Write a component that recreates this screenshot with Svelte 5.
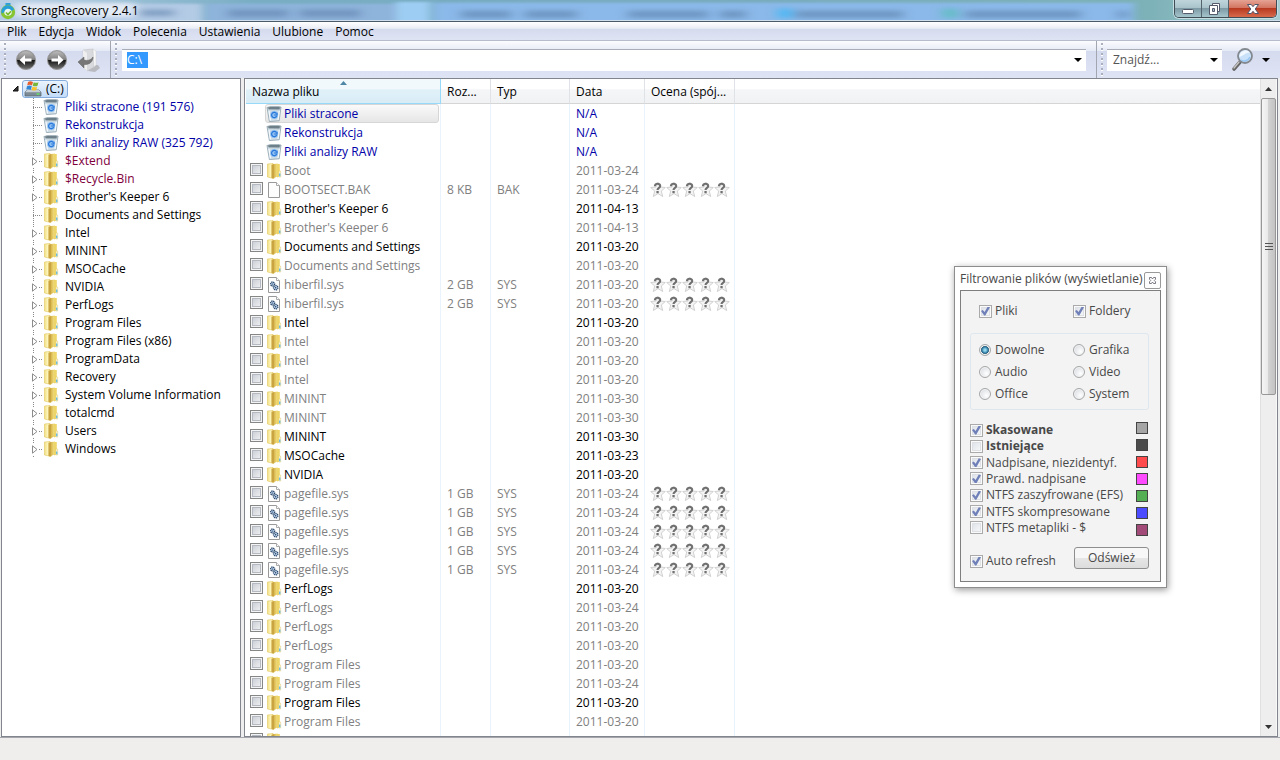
<script lang="ts">
	type Kind = 'bin' | 'folder' | 'file' | 'sys'
	type Tone = 'system' | 'meta' | 'normal' | 'deleted'

	interface TreeItem {
		label: string
		kind: Kind
		tone: Tone
		expandable: boolean
	}

	interface Row {
		name: string
		kind: Kind
		tone: Tone
		size: string
		type: string
		date: string
	}

	const menu = ['Plik', 'Edycja', 'Widok', 'Polecenia', 'Ustawienia', 'Ulubione', 'Pomoc']

	function branch(label: string, tone: Tone = 'normal', expandable = true, kind: Kind = 'folder'): TreeItem {
		return { label, kind, tone, expandable }
	}

	const tree: TreeItem[] = [
		branch('Pliki stracone (191 576)', 'system', false, 'bin'),
		branch('Rekonstrukcja', 'system', false, 'bin'),
		branch('Pliki analizy RAW (325 792)', 'system', false, 'bin'),
		branch('$Extend', 'meta'),
		branch('$Recycle.Bin', 'meta'),
		branch("Brother's Keeper 6"),
		branch('Documents and Settings', 'normal', false),
		branch('Intel'),
		branch('MININT'),
		branch('MSOCache'),
		branch('NVIDIA'),
		branch('PerfLogs'),
		branch('Program Files'),
		branch('Program Files (x86)'),
		branch('ProgramData'),
		branch('Recovery'),
		branch('System Volume Information'),
		branch('totalcmd'),
		branch('Users'),
		branch('Windows'),
	]

	function bin(name: string): Row {
		return { name, kind: 'bin', tone: 'system', size: '', type: '', date: 'N/A' }
	}

	function folder(name: string, date: string, tone: Tone = 'deleted'): Row {
		return { name, kind: 'folder', tone, size: '', type: '', date }
	}

	function sys(name: string, size: string, date: string): Row {
		return { name, kind: 'sys', tone: 'deleted', size, type: 'SYS', date }
	}

	const rows: Row[] = [
		bin('Pliki stracone'),
		bin('Rekonstrukcja'),
		bin('Pliki analizy RAW'),
		folder('Boot', '2011-03-24'),
		{ name: 'BOOTSECT.BAK', kind: 'file', tone: 'deleted', size: '8 KB', type: 'BAK', date: '2011-03-24' },
		folder("Brother's Keeper 6", '2011-04-13', 'normal'),
		folder("Brother's Keeper 6", '2011-04-13'),
		folder('Documents and Settings', '2011-03-20', 'normal'),
		folder('Documents and Settings', '2011-03-20'),
		sys('hiberfil.sys', '2 GB', '2011-03-20'),
		sys('hiberfil.sys', '2 GB', '2011-03-20'),
		folder('Intel', '2011-03-20', 'normal'),
		folder('Intel', '2011-03-20'),
		folder('Intel', '2011-03-20'),
		folder('Intel', '2011-03-20'),
		folder('MININT', '2011-03-30'),
		folder('MININT', '2011-03-30'),
		folder('MININT', '2011-03-30', 'normal'),
		folder('MSOCache', '2011-03-23', 'normal'),
		folder('NVIDIA', '2011-03-20', 'normal'),
		sys('pagefile.sys', '1 GB', '2011-03-24'),
		sys('pagefile.sys', '1 GB', '2011-03-24'),
		sys('pagefile.sys', '1 GB', '2011-03-24'),
		sys('pagefile.sys', '1 GB', '2011-03-24'),
		sys('pagefile.sys', '1 GB', '2011-03-24'),
		folder('PerfLogs', '2011-03-20', 'normal'),
		folder('PerfLogs', '2011-03-24'),
		folder('PerfLogs', '2011-03-20'),
		folder('PerfLogs', '2011-03-20'),
		folder('Program Files', '2011-03-20'),
		folder('Program Files', '2011-03-24'),
		folder('Program Files', '2011-03-20', 'normal'),
		folder('Program Files', '2011-03-20'),
		folder('', ''),
	]

	let selectedRow = $state(0)
	let path = $state('C:\\')
	let category = $state('Dowolne')
	let dialogOpen = $state(true)
	let showFiles = $state(true)
	let showFolders = $state(true)
	let autoRefresh = $state(true)

	const categories = ['Dowolne', 'Grafika', 'Audio', 'Video', 'Office', 'System']

	let filters = $state([
		{ label: 'Skasowane', color: '#a5a5a5', on: true, strong: true },
		{ label: 'Istniejące', color: '#4b4b4b', on: false, strong: true },
		{ label: 'Nadpisane, niezidentyf.', color: '#ff4b4b', on: true, strong: false },
		{ label: 'Prawd. nadpisane', color: '#ff4bff', on: true, strong: false },
		{ label: 'NTFS zaszyfrowane (EFS)', color: '#54ae54', on: true, strong: false },
		{ label: 'NTFS skompresowane', color: '#4b4bff', on: true, strong: false },
		{ label: 'NTFS metapliki - $', color: '#a34b78', on: false, strong: false },
	])
</script>

{#snippet icon(kind: Kind)}
	<svg class="icon" width="16" height="16" viewBox="0 0 16 16" aria-hidden="true">
		{#if kind === 'bin'}
			<path d="M1 1.500 15 1l-1.800 13.800-9.800.8z" fill="#cfdde6" stroke="#8fa2ad" stroke-width=".8" />
			<path d="M1 1.500 4.500.5h8L15 1.500l-2 2.300-10-.2z" fill="#6d7f88" stroke="#a8b8c0" stroke-width=".8" />
			<path d="m3 5 1.400 9.300M13.300 5l-1.300 9" stroke="#f5fafc" stroke-width="1.200" />
			<circle cx="8.200" cy="9" r="4" fill="#8fc0f4" />
			<path d="M10.200 7.400a2.600 2.600 0 1 0 .4 2.600M8.200 9H11V6.700" fill="none" stroke="#2877d8" stroke-width="1.200" />
		{:else if kind === 'folder'}
			<path d="M1.500 1 7 .5l1 1v14L1.500 14z" fill="url(#folder-left)" stroke="#e0c860" stroke-width=".6" />
			<path d="M5.500 2 8 1v14l-1 .6-1.500-.6z" fill="#c9a440" />
			<path d="m8 1 4-.5v12.800L8 15z" fill="url(#folder-mid)" />
			<path d="M11 1h2.800v12.500L11 14.500z" fill="#eed568" />
			<path d="M12.800 8h1.900v6h-1.900z" fill="#fbf8de" stroke="#dcbf50" stroke-width=".4" />
			<path d="M13.800 10.500v2.800" stroke="#31a7ec" />
		{:else}
			<path d="M2.500.5h8l3 3v12h-11z" fill="#fdfdfd" stroke="#999" />
			<path d="M10.500.5v3h3" fill="#fff" stroke="#aaa" />
			{#if kind === 'sys'}
				<circle cx="6.600" cy="7" r="2" fill="#bdd0e8" stroke="#29496d" stroke-width="1.300" stroke-dasharray="1.200 .6" />
				<circle cx="9.700" cy="10.700" r="2.200" fill="#bdd0e8" stroke="#29496d" stroke-width="1.300" stroke-dasharray="1.200 .6" />
				<circle cx="6.600" cy="7" r=".6" fill="#173a63" />
				<circle cx="9.700" cy="10.700" r=".7" fill="#173a63" />
			{/if}
		{/if}
	</svg>
{/snippet}

{#snippet caret()}
	<svg width="8" height="4" viewBox="0 0 8 4" aria-hidden="true"><path d="M0 0h8L4 4z" fill="#000" /></svg>
{/snippet}

{#snippet arrowIcon(back: boolean)}
	<svg width="22" height="22" viewBox="0 0 22 22" aria-hidden="true">
		<circle cx="11" cy="11" r="9.500" fill="url(#orb)" stroke="#999" />
		<path d="M2.200 11a8.800 8.800 0 0 1 17.600 0z" fill="#fff" opacity=".25" />
		<path
			d={back ? 'M4.500 11 10 6v3.400h6.500v3.200H10V16z' : 'M17.500 11 12 6v3.400H5.500v3.200H12V16z'}
			fill="#fff"
		/>
	</svg>
{/snippet}

<svg class="defs" width="0" height="0" aria-hidden="true">
	<defs>
		<linearGradient id="folder-left">
			<stop offset="0" stop-color="#f2df86" />
			<stop offset=".5" stop-color="#fdf6bd" />
			<stop offset="1" stop-color="#e2c65a" />
		</linearGradient>
		<linearGradient id="folder-mid">
			<stop offset="0" stop-color="#d8b64c" />
			<stop offset="1" stop-color="#f8e78e" />
		</linearGradient>
		<linearGradient id="orb" x2="0" y2="1">
			<stop offset="0" stop-color="#aaa" />
			<stop offset=".48" stop-color="#555" />
			<stop offset=".5" stop-color="#111" />
			<stop offset="1" stop-color="#777" />
		</linearGradient>
		<filter id="tab-blur" x="-5%" y="-50%" width="110%" height="200%" color-interpolation-filters="sRGB">
			<feGaussianBlur stdDeviation="4 1" />
		</filter>
		<filter id="text-blur" x="-5%" y="-100%" width="110%" height="300%" color-interpolation-filters="sRGB">
			<feGaussianBlur stdDeviation="6 2" />
		</filter>
	</defs>
</svg>

<div class="window">
	<header class="titlebar">
		<svg class="glass" viewBox="0 0 1280 21" preserveAspectRatio="none" aria-hidden="true">
			<g filter="url(#tab-blur)">
				<rect x="-20" y="4" width="222" height="24" fill="#b4cbe6" />
				<rect x="207" y="4" width="190" height="24" fill="#8fb4dc" />
				<rect x="396" y="2" width="34" height="24" fill="#9dcdf2" />
				<rect x="434" y="3" width="700" height="25" fill="#8bb9e9" />
			</g>
			<g filter="url(#text-blur)">
				<rect x="15" y="3" width="120" height="15" fill="#e2eaf4" />
				<g fill="#5b7fa8" opacity=".55">
					<rect x="140" y="10" width="34" height="7" />
					<rect x="228" y="10" width="60" height="8" />
					<rect x="300" y="10" width="60" height="8" />
					<rect x="461" y="11" width="50" height="8" />
					<rect x="525" y="11" width="52" height="8" />
					<rect x="628" y="11" width="80" height="8" />
					<rect x="720" y="11" width="26" height="8" />
					<rect x="795" y="11" width="108" height="8" />
					<rect x="965" y="11" width="116" height="8" />
					<rect x="1118" y="11" width="10" height="8" />
				</g>
				<rect x="778" y="9" width="14" height="10" fill="#4fb8f4" />
				<rect x="943" y="9" width="14" height="10" fill="#62bcc4" />
			</g>
		</svg>
		<svg class="logo" width="16" height="18" viewBox="0 0 16 18" aria-hidden="true">
			<path d="M5.500 1h5v2.500h-5z" fill="#2b9fdb" />
			<circle cx="8" cy="10" r="5.500" fill="#e9f6ef" stroke="#87c532" stroke-width="3.400" />
			<path d="M1.700 11.500A6.400 6.400 0 0 1 14 7.800l-2.500 1A4 4 0 0 0 4 10.200z" fill="#269fdb" />
			<path d="m6 10.500 2 2 3-3.300" fill="none" stroke="#77b828" stroke-width="1.600" />
		</svg>
		<h1>StrongRecovery 2.4.1</h1>
		<div class="window-buttons">
			<button type="button" aria-label="Minimalizuj">
				<svg width="14" height="12" viewBox="0 0 14 12"><rect x="1.500" y="6.500" width="11" height="4" rx="1" fill="#fff" stroke="#535a6c" /></svg>
			</button>
			<button type="button" aria-label="Przywróć">
				<svg width="14" height="14" viewBox="0 0 14 14">
					<path d="M4.500 1.500h7v8h-7z" fill="#fff" stroke="#535a6c" />
					<path d="M1.500 3.500h8v9h-8z" fill="#fff" stroke="#535a6c" />
					<path d="M4.500 6.500h2v3h-2z" fill="#a9bdc8" stroke="#535a6c" />
				</svg>
			</button>
			<button class="close" type="button" aria-label="Zamknij">
				<svg width="14" height="12" viewBox="0 0 14 12">
					<path d="M1.500 1.500h3.700L7 3.700l1.800-2.200h3.700L9.200 6l3.300 4.500H8.800L7 8.300l-1.800 2.200H1.500L4.800 6z" fill="#fff" stroke="#4f5469" />
				</svg>
			</button>
		</div>
	</header>

	<nav class="menubar">
		{#each menu as item (item)}
			<button type="button">{item}</button>
		{/each}
	</nav>

	<div class="toolbar">
		<div class="band history">
			<button type="button" aria-label="Wstecz">{@render arrowIcon(true)}</button>
			<button type="button" aria-label="Dalej">{@render arrowIcon(false)}</button>
			<button type="button" aria-label="W górę">
				<svg width="24" height="26" viewBox="0 0 24 26" aria-hidden="true">
					<path d="M14 18h7l2 3-5 4-7-1z" fill="#b8bac0" />
					<path d="m6 3 10-1 1 18-7 4-4-4z" fill="#d9dadd" stroke="#c3c5c9" stroke-width=".6" />
					<path d="m6 3 4 3v18l-4-4z" fill="#efefef" />
					<path d="m16 2 3 2v14l-2 2z" fill="#f8f8f8" stroke="#ccc" stroke-width=".5" />
					<path d="m1 15 6-5v3c4 1 7 0 9-3 0 5-4 8-9 7.500V21z" fill="#777" stroke="#5c5c5c" stroke-width=".5" />
				</svg>
			</button>
		</div>
		<div class="band address">
			<div class="combo">
				<span class="path-size" data-value={path}>
					<input type="text" aria-label="Ścieżka" size="1" bind:value={path} />
				</span>
				<button type="button" aria-label="Rozwiń ścieżki">{@render caret()}</button>
			</div>
		</div>
		<div class="band search">
			<div class="combo">
				<input type="text" aria-label="Znajdź" placeholder="Znajdź..." />
				<button type="button" aria-label="Rozwiń wyszukiwania">{@render caret()}</button>
			</div>
			<button type="button" aria-label="Szukaj">
				<svg width="24" height="26" viewBox="0 0 24 26" aria-hidden="true">
					<path d="m4 22 6-7" stroke="#666" stroke-width="3.600" stroke-linecap="round" />
					<path d="m4 21 5-6" stroke="#c5c5c5" stroke-width="1.400" stroke-linecap="round" />
					<circle cx="15" cy="9" r="7" fill="#c9e2fa" stroke="#83888f" stroke-width="1.800" />
					<path d="M9.500 10c3-1 7-5 10.500-4.500A6 6 0 0 0 9.500 10" fill="#f1f8ff" />
					<path d="M11 13c3 2 7 1 9-3" fill="none" stroke="#95c5f4" stroke-width="1.500" />
				</svg>
			</button>
			<button type="button" aria-label="Opcje wyszukiwania">{@render caret()}</button>
		</div>
	</div>

	<main>
		<aside class="tree">
			<div class="root-row">
				<button class="root-toggle" type="button" aria-label="Zwiń">
					<svg width="7" height="7" viewBox="0 0 7 7"><path d="M6 1v5H1z" fill="#333" stroke="#111" /></svg>
				</button>
				<button class="root-item" type="button">
					<svg width="18" height="16" viewBox="0 0 18 16" aria-hidden="true">
						<path d="M3 9h12l2 2v4H1v-4z" fill="#7c8a95" stroke="#54616b" stroke-width=".7" />
						<path d="M3 9h12l2 2.200H1z" fill="#c5d0d8" />
						<path d="M12.500 13h3" stroke="#63e463" stroke-width="1.500" />
						<path d="M4 1c2-1 3-1 5 0L8 4.500C6.500 3.600 5 3.600 3.200 4.400z" fill="#e85f2c" />
						<path d="M9.700 1.300c2 .8 3 .7 4.800 0l-1 3.500c-1.600.8-3 .7-4.700 0z" fill="#77b63a" />
						<path d="M3 5.200c1.800-.8 3.200-.8 4.800.1l-.9 3.400C5.500 8 4 8 2.200 8.600z" fill="#2f86d6" />
						<path d="M8.500 5.600c1.800.8 3.200.8 4.700.1l-.9 3.300c-1.600.8-3 .7-4.600 0z" fill="#f8c32c" />
					</svg>
					<span>(C:)</span>
				</button>
			</div>
			<ul>
				{#each tree as item (item.label)}
					<li>
						<span class="stem">
							{#if item.expandable}
								<button type="button" aria-label={`Rozwiń ${item.label}`}>
									<svg width="6" height="9" viewBox="0 0 6 9"><path d="M.5.8 5 4.500.5 8.200z" fill="#fff" stroke="#8c8c8c" /></svg>
								</button>
							{/if}
						</span>
						{@render icon(item.kind)}
						<button class={`node ${item.tone}`} type="button">{item.label}</button>
					</li>
				{/each}
			</ul>
		</aside>

		<section class="files">
			<div class="table-area">
				<table>
					<colgroup>
						<col class="col-name" />
						<col class="col-size" />
						<col class="col-type" />
						<col class="col-date" />
						<col class="col-rating" />
						<col />
					</colgroup>
					<thead>
						<tr>
							<th class="sorted">
								<svg width="7" height="4" viewBox="0 0 7 4" aria-hidden="true"><path d="M0 4 3.500 0 7 4z" fill="#4f86a5" /></svg>
								Nazwa pliku
							</th>
							<th>Roz...</th>
							<th>Typ</th>
							<th>Data</th>
							<th>Ocena (spój...</th>
							<th class="rest" aria-hidden="true"></th>
						</tr>
					</thead>
					<tbody>
						{#each rows as row, i (i)}
							<tr class={row.tone} onclick={() => (selectedRow = i)}>
								<td class="name-cell">
									<div class="name">
										<span class="tick">
											{#if row.kind !== 'bin'}
												<input type="checkbox" aria-label={`Zaznacz ${row.name}`} />
											{/if}
										</span>
										<span class="entry" class:selected={i === selectedRow}>
											{@render icon(row.kind)}
											<span>{row.name}</span>
										</span>
									</div>
								</td>
								<td>{row.size}</td>
								<td>{row.type}</td>
								<td>{row.date}</td>
								<td class="rating">
									{#if row.type}
										<svg width="80" height="16" viewBox="0 0 80 16" aria-hidden="true">
											{#each [0, 16, 32, 48, 64] as x (x)}
												<g transform={`translate(${x} 0)`}>
													<path d="m8 .5 2 4.500 5.300.5-4 3.500 1.400 5.500L8 11.600l-4.700 2.900L4.700 9l-4-3.500L6 5z" fill="#f4f4f4" stroke="#c6c6c6" stroke-width=".8" />
													<path d="M4.900 4.200C5 1 10.300 1 10.200 4c0 1.900-2.700 1.800-2.700 4" fill="none" stroke="#707070" stroke-width="2.100" />
													<path d="M6.400 9h2.300v2.200H6.400z" fill="#707070" />
												</g>
											{/each}
										</svg>
									{/if}
								</td>
								<td class="rest"></td>
							</tr>
						{/each}
					</tbody>
				</table>
			</div>
			<div class="scrollbar">
				<button type="button" aria-label="Przewiń w górę">
					<svg width="7" height="4" viewBox="0 0 7 4"><path d="M0 4 3.500 0 7 4z" fill="#333" /></svg>
				</button>
				<div class="track">
					<div class="thumb"><i></i><i></i><i></i></div>
				</div>
				<button type="button" aria-label="Przewiń w dół">
					<svg width="7" height="4" viewBox="0 0 7 4"><path d="M0 0h7L3.500 4z" fill="#333" /></svg>
				</button>
			</div>
		</section>
	</main>

	<footer></footer>

	{#if dialogOpen}
		<div class="dialog" role="dialog" aria-labelledby="filter-title">
			<div class="dialog-head">
				<h2 id="filter-title">Filtrowanie plików (wyświetlanie)</h2>
				<button type="button" aria-label="Zamknij filtr" onclick={() => (dialogOpen = false)}>
					<svg width="7" height="7" viewBox="0 0 7 7">
						<path d="M.5.500h2l1 1.500 1-1.500h2v1.700L5.300 3.500l1.200 1.300v1.700h-2L3.500 5l-1 1.500h-2V4.800l1.200-1.300L.5 2.200z" fill="#fff" stroke="#6c6c78" stroke-width=".9" />
					</svg>
				</button>
			</div>
			<div class="dialog-body">
				<div class="kinds">
					<label><input type="checkbox" bind:checked={showFiles} /> Pliki</label>
					<label><input type="checkbox" bind:checked={showFolders} /> Foldery</label>
				</div>
				<fieldset>
					{#each categories as item (item)}
						<label><input type="radio" name="category" value={item} bind:group={category} /> {item}</label>
					{/each}
				</fieldset>
				<div class="states">
					<div class="state-labels">
						{#each filters as filter (filter.label)}
							<label class:strong={filter.strong}>
								<input type="checkbox" bind:checked={filter.on} />
								{filter.label}
							</label>
						{/each}
					</div>
					<div class="swatches">
						{#each filters as filter (filter.label)}
							<span style:background={filter.color}></span>
						{/each}
					</div>
				</div>
				<div class="actions">
					<label><input type="checkbox" bind:checked={autoRefresh} /> Auto refresh</label>
					<button type="button">Odśwież</button>
				</div>
			</div>
		</div>
	{/if}
</div>

<style>
	:global(body) {
		background: #fff;
	}

	.defs {
		position: absolute;
	}

	.window {
		display: flex;
		flex-direction: column;
		height: 100vh;
		position: relative;
		overflow: hidden;
		font: 12px/16px 'Segoe UI', 'Open Sans', 'Noto Sans', sans-serif;
		color: #000;
	}

	.window * {
		box-sizing: border-box;
	}

	button {
		display: inline-flex;
		align-items: center;
		justify-content: center;
		padding: 0;
		border: 0;
		background: none;
		color: inherit;
		font: inherit;
		white-space: nowrap;
	}

	.titlebar {
		position: relative;
		display: flex;
		align-items: center;
		flex: none;
		height: 22px;
		border-bottom: 1px solid #4a5a68;
		background: linear-gradient(90deg, #b9d0e5, #78adc4 20%, #79acc0 55%, #7db2b8 90%, #a9ced2);
		box-shadow: inset 0 -1px #cfe0ec;
	}

	.glass {
		position: absolute;
		inset: 0;
		width: 100%;
		height: 20px;
		overflow: hidden;
	}

	.logo {
		position: relative;
		flex: none;
	}

	h1 {
		position: relative;
		margin: 0 auto 0 5px;
		font-size: 12px;
		font-weight: 400;
	}

	.window-buttons {
		position: relative;
		display: flex;
		align-self: flex-start;
		height: 18px;
		margin-right: 3px;
		border: 1px solid #414d55;
		border-top: 0;
		border-radius: 0 0 5px 5px;
		overflow: hidden;
		box-shadow: 0 0 0 1px #c7dde4;
	}

	.window-buttons button {
		width: 27px;
		background: linear-gradient(#c0d6dc, #a9c2ca 45%, #7d9aa5 50%, #a5c5cc);
		border-right: 1px solid #53646d;
	}

	.window-buttons .close {
		width: 47px;
		border: 0;
		background: linear-gradient(#e5a394, #d37562 45%, #b83a20 50%, #d76a4a);
	}

	.menubar {
		display: flex;
		flex: none;
		gap: 12px;
		height: 19px;
		padding: 2px 7px 0;
		border-bottom: 1px solid #b6bccc;
		background: linear-gradient(#fff, #e9edf5 35%, #d5dbee 40%, #dfe4f4);
	}

	.toolbar {
		display: flex;
		flex: none;
		height: 37px;
		background: linear-gradient(#fbfcfe, #e6eaf5 26%, #d5dbee 28%, #dfe4f5);
	}

	.band {
		display: flex;
		align-items: center;
		padding-left: 15px;
		border-right: 1px solid #a2a6b0;
		position: relative;
	}

	.band::before {
		content: '';
		position: absolute;
		left: 4px;
		top: 2px;
		bottom: 2px;
		width: 2px;
		background: repeating-linear-gradient(#a9afbd 0 2px, #fff 2px 3px, transparent 3px 5px);
	}

	.history {
		gap: 9px;
		width: 111px;
	}

	.address {
		flex: 1;
		padding-left: 11px;
		padding-right: 10px;
	}

	.search {
		width: 183px;
		padding-left: 10px;
		gap: 8px;
		border-right: 0;
	}

	.combo {
		display: flex;
		align-items: center;
		flex: 1;
		height: 22px;
		background: #fff;
		border-top: 1px solid #a8adb8;
	}

	.search .combo {
		flex: none;
		width: 115px;
	}

	.combo input {
		flex: 1;
		min-width: 0;
		width: 100%;
		padding: 0 6px;
		border: 0;
		outline: 0;
		background: none;
		font: inherit;
		color: #000;
	}

	.combo input::placeholder {
		color: #555;
		opacity: 1;
	}

	.combo .path-size {
		display: inline-grid;
		margin-left: 5px;
		margin-right: auto;
		background: #3399ff;
	}

	.path-size::after {
		content: attr(data-value);
		visibility: hidden;
		height: 0;
	}

	.combo .path-size input {
		grid-column: 1;
		padding: 0;
		color: #fff;
	}

	.combo button {
		width: 16px;
		height: 20px;
	}

	main {
		display: flex;
		flex: 1;
		gap: 3px;
		min-height: 0;
		padding: 0 2px 0 1px;
		background: #eee;
		border-bottom: 1px solid #a3a6ac;
	}

	.tree,
	.files {
		border: 1px solid #82858d;
		background: #fff;
		overflow: hidden;
	}

	.tree {
		flex: none;
		width: 240px;
	}

	.root-row {
		display: flex;
		align-items: center;
		height: 19px;
		padding-left: 9px;
	}

	.root-toggle {
		width: 9px;
		margin-right: 2px;
	}

	.root-item {
		gap: 4px;
		height: 18px;
		padding: 0 3px 0 1px;
		border: 1px solid #84acdd;
		border-radius: 3px;
		background: linear-gradient(#eaf3fd, #c3dcf8);
	}

	ul {
		margin: 0;
		padding: 0;
		list-style: none;
	}

	li {
		display: flex;
		align-items: center;
		height: 18px;
		padding-left: 29px;
	}

	.stem {
		position: relative;
		display: flex;
		align-items: center;
		align-self: stretch;
		width: 12px;
		background:
			repeating-linear-gradient(#888 0 1px, transparent 1px 2px) 2px 0 / 1px 100% no-repeat,
			repeating-linear-gradient(90deg, #888 0 1px, transparent 1px 2px) 2px 9px / 10px 1px no-repeat;
	}

	.stem button {
		width: 8px;
		height: 13px;
		background: #fff;
	}

	.icon {
		flex: none;
	}

	.node {
		margin-left: 6px;
	}

	.system {
		color: #0000a8;
	}

	.meta {
		color: #80003c;
	}

	.deleted {
		color: #808080;
	}

	.files {
		display: flex;
		flex: 1;
		min-width: 0;
	}

	.table-area {
		flex: 1;
		min-width: 0;
		padding-left: 1px;
		overflow: hidden;
	}

	table {
		width: 100%;
		table-layout: fixed;
		border-collapse: separate;
		border-spacing: 0;
	}

	.col-name {
		width: 195px;
	}

	.col-size {
		width: 50px;
	}

	.col-type {
		width: 79px;
	}

	.col-date {
		width: 75px;
	}

	.col-rating {
		width: 90px;
	}

	th {
		position: relative;
		height: 25px;
		padding: 1px 0 0 6px;
		border-right: 1px solid #dfe2e6;
		border-bottom: 1px solid #d5d5d5;
		background: linear-gradient(#fff 40%, #f5f6f8 45%, #f1f2f4);
		font-weight: 400;
		text-align: left;
		white-space: nowrap;
	}

	th.sorted {
		border-color: #96d9f9;
		background: linear-gradient(#f2f9fc 40%, #e1f1f9 45%, #d8ecf6);
	}

	th svg {
		position: absolute;
		top: 2px;
		left: calc(50% - 3px);
	}

	td {
		height: 19px;
		padding: 0 0 0 6px;
		border-right: 1px solid #e8f3fd;
		line-height: 18px;
		white-space: nowrap;
	}

	td.name-cell {
		padding: 0 1px 0 4px;
	}

	th.rest,
	td.rest {
		border-right: 0;
	}

	.name {
		display: flex;
		align-items: center;
		height: 19px;
	}

	.tick {
		display: flex;
		align-self: flex-start;
		width: 15px;
		padding-top: 2px;
	}

	.entry {
		display: flex;
		align-items: center;
		flex: 1;
		gap: 2px;
		height: 19px;
		border: 1px solid transparent;
		border-radius: 3px;
	}

	.entry.selected {
		border-color: #d6d6d6;
		background: linear-gradient(#fafafa, #e6e6e6);
	}

	td.rating {
		padding-left: 5px;
	}

	.rating svg {
		display: block;
	}

	input[type='checkbox'] {
		appearance: none;
		flex: none;
		width: 13px;
		height: 13px;
		margin: 0;
		border: 1px solid #858686;
		background: linear-gradient(135deg, #c3c8d0, #f6f6f6);
		box-shadow: inset 0 0 0 1px #f4f4f4, inset 0 0 0 2px #b5bac2;
	}

	.dialog input[type='checkbox'] {
		border-color: #aaa;
		background: linear-gradient(135deg, #dadfe6, #fbfbfb);
		box-shadow: inset 0 0 0 1px #fafafa, inset 0 0 0 2px #dde0e4;
	}

	input[type='checkbox']:checked::before {
		content: '';
		display: block;
		width: 9px;
		height: 9px;
		margin: 1px;
		background: #7080b8;
		clip-path: polygon(0 50%, 20% 38%, 40% 62%, 75% 0, 100% 8%, 48% 100%, 35% 100%);
	}

	input[type='radio'] {
		appearance: none;
		flex: none;
		width: 12px;
		height: 12px;
		margin: 0;
		border: 1px solid #a5a7a9;
		border-radius: 50%;
		background: radial-gradient(circle at 65% 65%, #fff, #d0d4da);
		box-shadow: inset 0 0 0 1px #f4f4f4;
	}

	input[type='radio']:checked {
		background: radial-gradient(circle, #8fd6ee 0 1px, #317ba1 3px, #24516c 4px, #ddd 4px);
	}

	.scrollbar {
		display: flex;
		flex-direction: column;
		flex: none;
		width: 17px;
		background: #eee;
		border-left: 1px solid #e0e0e0;
		border-right: 1px solid #f8f8f8;
	}

	.scrollbar button {
		height: 19px;
	}

	.track {
		flex: 1;
		min-height: 0;
	}

	.thumb {
		display: flex;
		flex-direction: column;
		align-items: center;
		justify-content: center;
		gap: 2px;
		height: 48%;
		border: 1px solid #979797;
		border-radius: 2px;
		background: linear-gradient(90deg, #f5f5f5, #e9e9e9 45%, #d2d2d2 50%, #c3c3c3);
	}

	.thumb i {
		width: 8px;
		height: 1px;
		background: #555;
	}

	footer {
		flex: none;
		height: 22px;
		background: #f0eded;
	}

	.dialog {
		position: absolute;
		top: 266px;
		right: 113px;
		width: 213px;
		padding: 0 5px 5px;
		border: 1px solid #8d8d8d;
		background: #fff;
		box-shadow: 1px 2px 7px rgba(0, 0, 0, 0.4);
		color: #484848;
	}

	.dialog-head {
		display: flex;
		align-items: center;
		justify-content: space-between;
		height: 23px;
	}

	h2 {
		margin: 0;
		font-size: 12px;
		font-weight: 400;
		white-space: nowrap;
	}

	.dialog-head button {
		width: 17px;
		height: 17px;
		margin-top: 3px;
		border: 1px solid #999;
		border-radius: 2px;
		background: #fdfdfd;
	}

	.dialog-body {
		padding: 12px 11px 12px 9px;
		border: 1px solid #7e7e7e;
		background: #f3f3f3;
	}

	.dialog label {
		display: flex;
		align-items: center;
		gap: 3px;
		height: 16px;
		white-space: nowrap;
	}

	.kinds {
		display: grid;
		grid-template-columns: 94px 1fr;
		padding-left: 9px;
	}

	fieldset {
		display: grid;
		grid-template-columns: 94px 1fr;
		row-gap: 6px;
		margin: 14px 0 12px;
		padding: 8px 0 7px 8px;
		border: 1px solid #dfe7ee;
		border-radius: 3px;
	}

	.dialog fieldset label {
		gap: 4px;
	}

	.states {
		display: flex;
		justify-content: space-between;
		margin-right: 1px;
	}

	.state-labels {
		display: flex;
		flex-direction: column;
		justify-content: space-between;
	}

	.strong {
		font-weight: 700;
	}

	.swatches {
		display: flex;
		flex-direction: column;
		gap: 5px;
	}

	.swatches span {
		width: 12px;
		height: 12px;
		border: 1px solid #444;
	}

	.actions {
		display: flex;
		align-items: flex-end;
		justify-content: space-between;
		margin-top: 11px;
	}

	.actions button {
		width: 75px;
		height: 22px;
		border: 1px solid #8e8e8e;
		border-radius: 3px;
		background: linear-gradient(#f7f7f7 48%, #e6e6e6 52%, #dcdcdc);
	}
</style>
